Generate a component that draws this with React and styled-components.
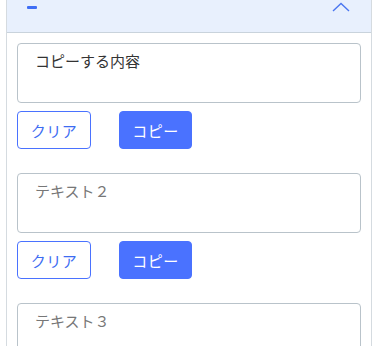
import React from "react";
import styled, { createGlobalStyle } from "styled-components";

const Global = createGlobalStyle`
  html, body { margin: 0; padding: 0; background: #ffffff; }
  body { font-family: "Noto Sans CJK JP", "Noto Sans", sans-serif; }
  * { box-sizing: border-box; }
`;

const Panel = styled.div`
  margin-left: 6px;
  width: 366px;
  border-left: 1px solid #d5dbe0;
  border-right: 1px solid #d5dbe0;
  background: #fff;
`;

const Header = styled.div`
  height: 33px;
  background: #e8f0fd;
  border-bottom: 1px solid #c9d3dc;
  display: flex;
  align-items: flex-start;
  justify-content: space-between;
  padding: 0 21px 0 20px;
`;

const Dash = styled.span`
  display: block;
  width: 10px;
  height: 3px;
  margin-top: 6px;
  border-radius: 1px;
  background: #3f6ef5;
`;

const Chevron = styled.svg`
  width: 18px;
  height: 10px;
  margin-top: 2px;
`;

const Body = styled.div`
  padding: 10px 10px 0 10px;
  display: flex;
  flex-direction: column;
`;

const Group = styled.div`
  display: flex;
  flex-direction: column;
  gap: 8px;
  margin-bottom: 24px;
`;

const Field = styled.textarea`
  display: block;
  width: 344px;
  height: 60px;
  resize: none;
  border: 1px solid #b9c3ca;
  border-radius: 4px;
  padding: 6px 17px;
  font-family: "Noto Sans CJK JP", "Noto Sans", sans-serif;
  font-size: 15px;
  line-height: 22px;
  color: #333;
  outline: none;
  &::placeholder { color: #777; }
`;

const Actions = styled.div`
  display: flex;
  gap: 28px;
`;

const Button = styled.button`
  width: ${(p) => (p.$primary ? "73px" : "74px")};
  height: 38px;
  padding: 0;
  border-radius: 4px;
  border: 1px solid #4a72ff;
  background: ${(p) => (p.$primary ? "#4a72ff" : "#fff")};
  color: ${(p) => (p.$primary ? "#fff" : "#3d6cf2")};
  font-family: "Noto Sans CJK JP", "Noto Sans", sans-serif;
  font-size: 15px;
  letter-spacing: 0.5px;
  line-height: 1;
  cursor: pointer;
`;

const items = [
  { value: "コピーする内容", placeholder: "" },
  { value: "", placeholder: "テキスト２" },
  { value: "", placeholder: "テキスト３" },
];

export default function App() {
  return (
    <>
      <Global />
      <Panel>
        <Header>
          <Dash />
          <Chevron viewBox="0 0 18 10">
            <path d="M1 9 L9 1.5 L17 9" fill="none" stroke="#4a76f0" strokeWidth="1.4" />
          </Chevron>
        </Header>
        <Body>
          {items.map((it, i) => (
            <Group key={i}>
              <Field defaultValue={it.value} placeholder={it.placeholder} />
              {i < 2 && (
                <Actions>
                  <Button>クリア</Button>
                  <Button $primary>コピー</Button>
                </Actions>
              )}
            </Group>
          ))}
        </Body>
      </Panel>
    </>
  );
}
